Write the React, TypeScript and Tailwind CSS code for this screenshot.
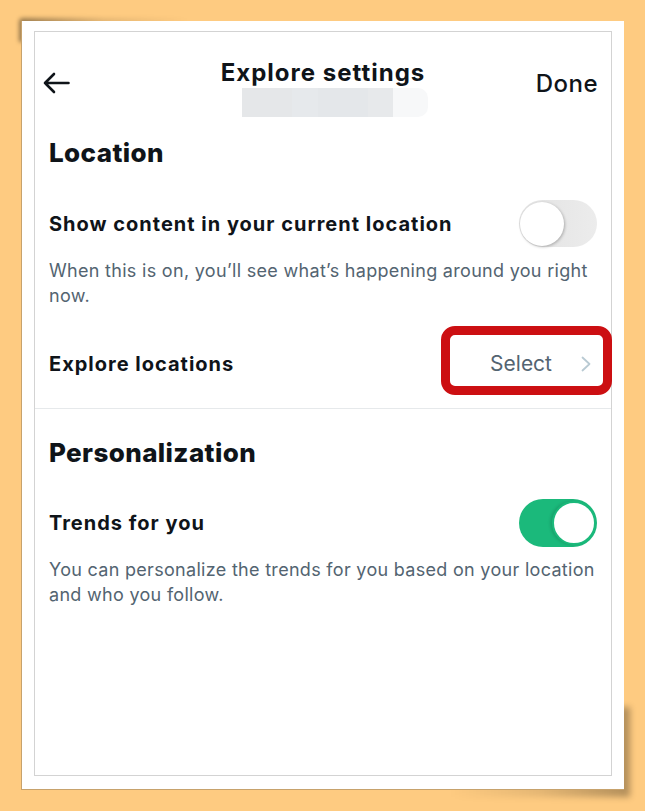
import { ReactNode } from "react";

const FONT = { fontFamily: "Inter, 'Noto Sans', Arial, sans-serif" };

const Toggle = ({ on }: { on: boolean }) =>
  on ? (
    <div className="flex h-[48px] w-[78px] shrink-0 items-center justify-end rounded-full bg-[#1bb97b] pr-px">
      <div className="h-[44px] w-[44px] rounded-full border-2 border-[#1bb97b] bg-white shadow-[-2px_0_3px_rgba(0,0,0,0.12)]" />
    </div>
  ) : (
    <div className="flex h-[47px] w-[78px] shrink-0 items-center rounded-full bg-gradient-to-r from-[#e2e2e2] to-[#ececec] pl-px">
      <div className="h-[44px] w-[44px] rounded-full bg-white shadow-[1px_1px_3px_rgba(0,0,0,0.25)]" />
    </div>
  );

const Row = ({ label, children }: { label: string; children: ReactNode }) => (
  <div className="flex items-center justify-between">
    <span className="text-[20px] font-bold leading-[24px] tracking-[1px] text-[#0f1419]">{label}</span>
    {children}
  </div>
);

const Desc = ({ children }: { children: ReactNode }) => (
  <p className="-mr-[10px] text-[18px] leading-[25px] tracking-[0.3px] text-[#536471]">{children}</p>
);

export default function App() {
  return (
    <div className="min-h-[811px] w-[645px] bg-[#fecb81] p-[21px]" style={FONT}>
      <div className="relative">
        {/* curled paper shadows */}
        <div className="absolute -left-[2px] -top-[3px] h-[24px] w-[170px] rounded-tl-sm bg-gradient-to-r from-black/40 via-black/10 to-transparent blur-[2px]" />
        <div className="absolute -right-[6px] -bottom-[7px] h-[90px] w-[180px] bg-gradient-to-l from-black/30 via-black/10 to-transparent blur-[3px]" />
        <div className="relative h-[769px] border-b border-l border-[#c7a26c] bg-white px-[12px] pb-[13px] pt-[10px]">
          <div className="flex h-full flex-col border border-[#d3d3d3]">
            {/* header */}
            <div className="grid grid-cols-[1fr_auto_1fr] items-start px-[8px] pt-[27px]">
              <svg
                className="mt-[13px] h-[22px] w-[27px]"
                viewBox="0 0 27 22"
                fill="none"
                stroke="#0f1419"
                strokeWidth="2.6"
                strokeLinecap="round"
                strokeLinejoin="round"
              >
                <path d="M25.5 11H2M11 2 2 11l9 9" />
              </svg>
              <div className="flex flex-col items-center">
                <h1 className="text-[24px] font-bold leading-[28px] tracking-[1px] text-[#0f1419]">Explore settings</h1>
                <div className="ml-[24px] mt-px flex h-[29px] w-[186px]">
                  <div className="w-[50px] bg-[#e5e7e9]" />
                  <div className="w-[26px] bg-[#e6e9ec]" />
                  <div className="w-[50px] bg-[#e4e7ea]" />
                  <div className="w-[25px] bg-[#e7e9eb]" />
                  <div className="w-[35px] rounded-r-[10px] bg-[#f7f8f9]" />
                </div>
              </div>
              <span className="mt-[11px] justify-self-end pr-[5px] text-[24px] font-medium leading-[28px] tracking-[0.5px] text-[#0f1419]">
                Done
              </span>
            </div>

            {/* location */}
            <div className="px-[14px]">
              <h2 className="mt-[20px] text-[26px] font-extrabold leading-[32px] tracking-[0.4px] text-[#0f1419]">Location</h2>
              <div className="mt-[31px]">
                <Row label="Show content in your current location">
                  <Toggle on={false} />
                </Row>
              </div>
              <div className="mt-[11px]">
                <Desc>When this is on, you’ll see what’s happening around you right now.</Desc>
              </div>
              <div className="mt-[18px] flex items-center justify-between">
                <span className="mt-[7px] text-[20px] font-bold leading-[24px] tracking-[1px] text-[#0f1419]">Explore locations</span>
                <div className="-mr-[15px] flex h-[69px] w-[171px] items-center justify-end gap-[29px] rounded-[14px] border-[9px] border-[#cc0f12] pr-[12px] pt-[6px]">
                  <span className="text-[21px] leading-[24px] text-[#536471]">Select</span>
                  <svg className="h-[16px] w-[10px]" viewBox="0 0 10 16" fill="none" stroke="#b9cad3" strokeWidth="1.8" strokeLinecap="round" strokeLinejoin="round">
                    <path d="M1.5 1.5 8.5 8l-7 6.5" />
                  </svg>
                </div>
              </div>
            </div>

            <div className="mt-[13px] border-t border-[#e6e9eb]" />

            {/* personalization */}
            <div className="px-[14px]">
              <h2 className="mt-[28px] text-[26px] font-extrabold leading-[32px] tracking-[0.4px] text-[#0f1419]">Personalization</h2>
              <div className="mt-[30px]">
                <Row label="Trends for you">
                  <Toggle on />
                </Row>
              </div>
              <div className="mt-[10px]">
                <Desc>You can personalize the trends for you based on your location and who you follow.</Desc>
              </div>
            </div>
          </div>
        </div>
      </div>
    </div>
  );
}
